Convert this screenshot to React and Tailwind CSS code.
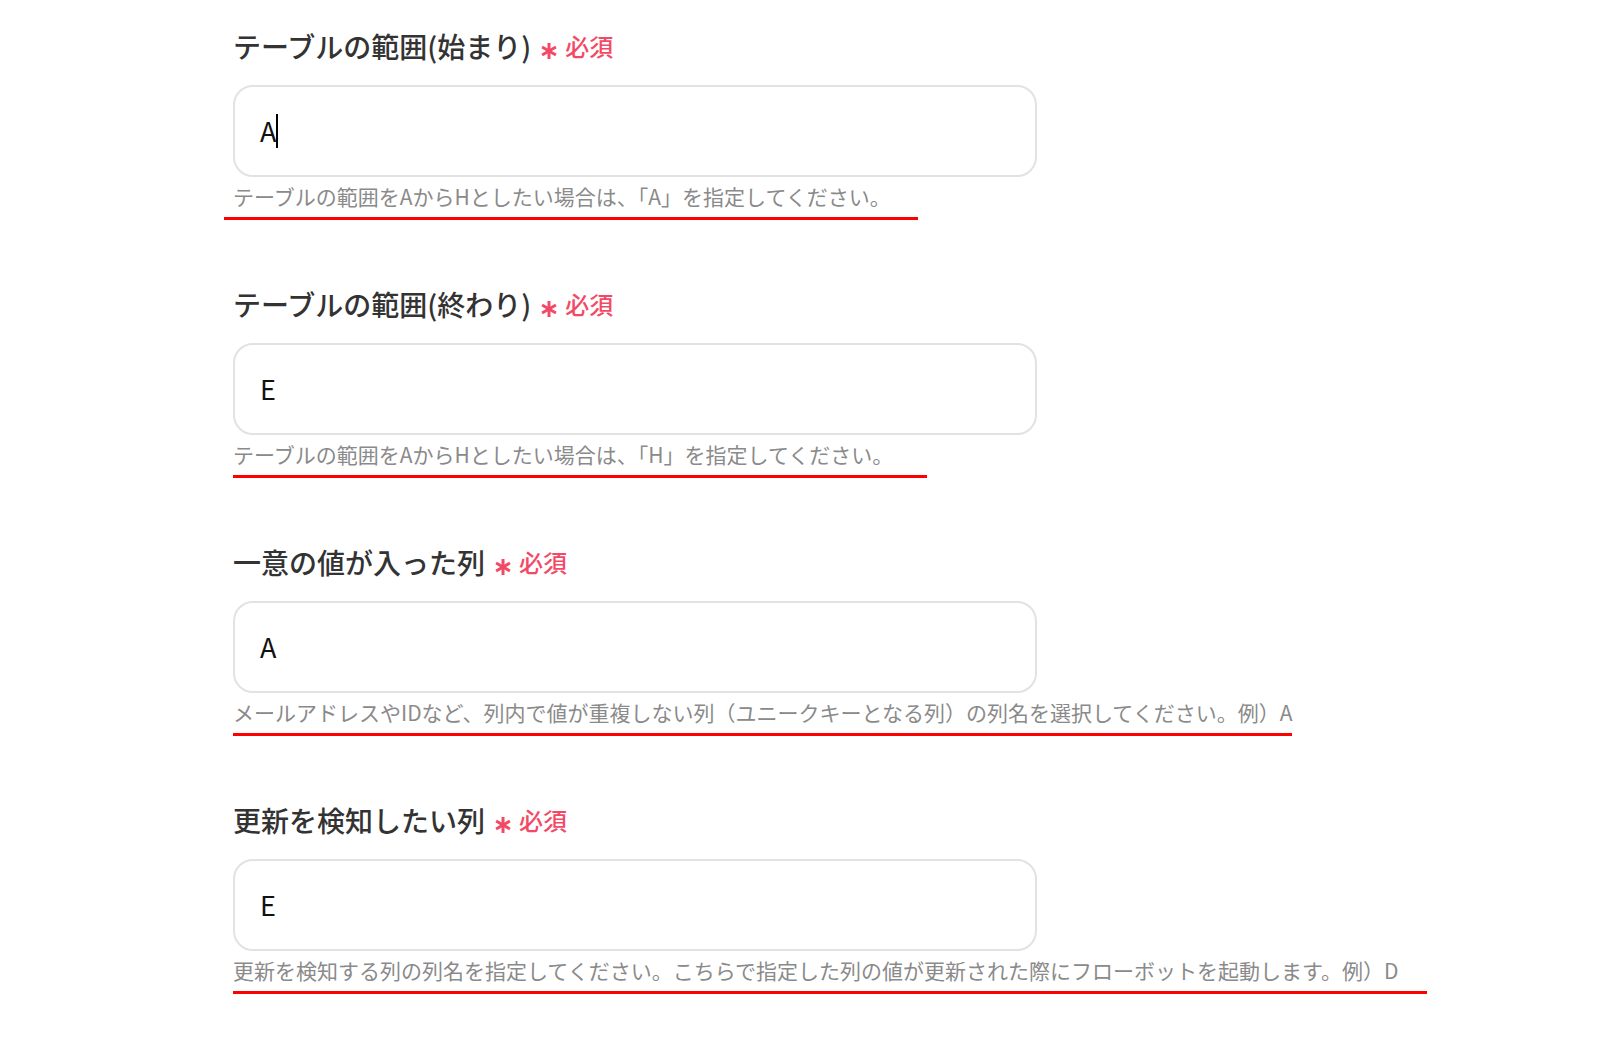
const fields = [
  {
    label: 'テーブルの範囲(始まり)',
    value: 'A',
    caret: true,
    help: 'テーブルの範囲をAからHとしたい場合は、「A」を指定してください。',
    line: 'ml-[-9px] w-[694px]',
  },
  {
    label: 'テーブルの範囲(終わり)',
    value: 'E',
    help: 'テーブルの範囲をAからHとしたい場合は、「H」を指定してください。',
    line: 'w-[694px]',
  },
  {
    label: '一意の値が入った列',
    value: 'A',
    help: 'メールアドレスやIDなど、列内で値が重複しない列（ユニークキーとなる列）の列名を選択してください。例）A',
    line: 'w-[1059px]',
  },
  {
    label: '更新を検知したい列',
    value: 'E',
    help: '更新を検知する列の列名を指定してください。こちらで指定した列の値が更新された際にフローボットを起動します。例）D',
    line: 'w-[1194px]',
  },
]

function Asterisk() {
  return (
    <svg width="18" height="18" viewBox="0 0 18 18" className="ml-[9px] mt-[10px] shrink-0">
      <g stroke="#f24a66" strokeWidth="3" strokeLinecap="butt">
        <line x1="9" y1="1" x2="9" y2="17" />
        <line x1="2.1" y1="5" x2="15.9" y2="13" />
        <line x1="2.1" y1="13" x2="15.9" y2="5" />
      </g>
    </svg>
  )
}

function Field({ field }) {
  return (
    <div className="flex flex-col">
      <div className="flex h-[36px] items-center">
        <span className="text-[28px] font-medium leading-[36px] text-[#333333]">{field.label}</span>
        <Asterisk />
        <span className="ml-[7px] text-[24px] font-medium leading-[30px] text-[#f24a66]">必須</span>
      </div>
      <div className="mt-[21px] flex h-[92px] w-[804px] items-center rounded-[20px] border-2 border-[#e2e2e2] bg-white pl-[25px]">
        <span className="text-[27px] leading-[34px] text-[#111111]">{field.value}</span>
        {field.caret && <span className="inline-block h-[34px] w-[2px] bg-black" />}
      </div>
      <p className="mt-[5px] whitespace-nowrap text-[21px] leading-[28px] text-[#8a8a8a]">{field.help}</p>
      <div className={`mt-[7px] h-[3px] bg-[#ff0000] ${field.line}`} />
    </div>
  )
}

export default function App() {
  return (
    <div
      className="min-h-[1056px] w-[1600px] bg-white pl-[233px] pt-[28px]"
      style={{ fontFamily: '"Noto Sans CJK JP", "Noto Sans", sans-serif' }}
    >
      <div className="flex flex-col gap-[66px]">
        {fields.map((f) => (
          <Field key={f.label} field={f} />
        ))}
      </div>
    </div>
  )
}
